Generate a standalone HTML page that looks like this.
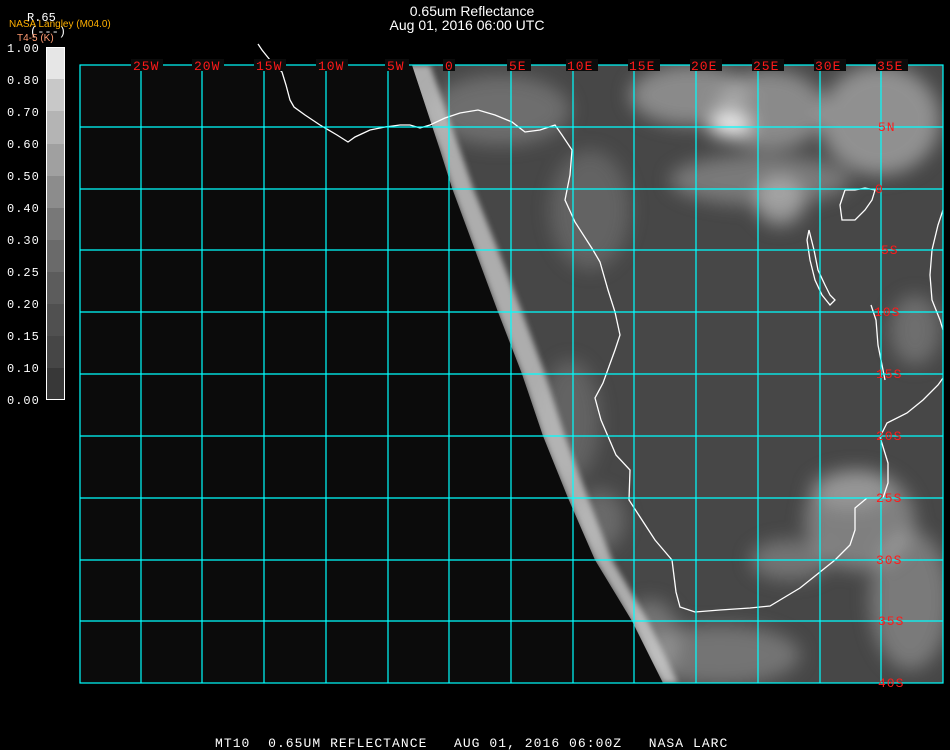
<!DOCTYPE html>
<html><head><style>
html,body{margin:0;padding:0;background:#000;width:950px;height:750px;overflow:hidden}
svg{position:absolute;left:0;top:0}
</style></head><body>
<svg width="950" height="750" viewBox="0 0 950 750" xmlns="http://www.w3.org/2000/svg">
<defs>
<filter id="b" x="-50%" y="-50%" width="200%" height="200%"><feGaussianBlur stdDeviation="9"/></filter>
<filter id="b2" x="-50%" y="-50%" width="200%" height="200%"><feGaussianBlur stdDeviation="3"/></filter>
<clipPath id="earth"><polygon points="412,65 440,150 452,188 475,250 498,312 522,374 543,436 568,498 595,560 632,621 663,683 943,683 943,65"/></clipPath>
</defs>
<rect x="80" y="65" width="863" height="618" fill="#0b0b0b"/>
<g clip-path="url(#earth)">
<rect x="400" y="65" width="543" height="618" fill="#474747"/>
<g filter="url(#b)" fill="#b8b8b8">
<ellipse cx="690" cy="95" rx="60" ry="30" opacity=".6"/>
<ellipse cx="770" cy="110" rx="55" ry="40" opacity=".6"/>
<ellipse cx="880" cy="120" rx="60" ry="55" opacity=".65"/>
<ellipse cx="760" cy="180" rx="90" ry="25" opacity=".45"/>
<ellipse cx="780" cy="200" rx="25" ry="25" opacity=".7"/>
<ellipse cx="730" cy="125" rx="22" ry="12" fill="#eee"/>
<ellipse cx="500" cy="110" rx="70" ry="35" opacity=".35"/>
<ellipse cx="590" cy="210" rx="40" ry="60" opacity=".25"/>
<ellipse cx="570" cy="420" rx="30" ry="60" opacity=".25"/>
<ellipse cx="860" cy="520" rx="55" ry="50" opacity=".5"/>
<ellipse cx="910" cy="600" rx="40" ry="70" opacity=".45"/>
<ellipse cx="790" cy="560" rx="40" ry="20" opacity=".4"/>
<ellipse cx="720" cy="655" rx="80" ry="30" opacity=".4"/>
<ellipse cx="650" cy="640" rx="30" ry="40" opacity=".4"/>
<ellipse cx="600" cy="520" rx="25" ry="30" opacity=".3"/>
<ellipse cx="915" cy="330" rx="25" ry="35" opacity=".35"/>
<ellipse cx="850" cy="490" rx="40" ry="20" opacity=".4"/>
</g>
<polygon filter="url(#b2)" fill="#cfcfcf" opacity=".75" points="405,65 440,150 452,188 475,250 498,312 522,374 543,436 568,498 595,560 632,621 663,683 678,683 648,621 612,560 588,498 565,436 545,374 522,312 498,250 473,188 460,150 430,65"/>
</g>
<g fill="none" stroke="#fff" stroke-width="1.3">
<polyline points="258,44 262,50 270,60 282,72 286,85 290,100 294,107 305,115 320,125 337,135 348,142 355,137 370,130 385,127 400,125 410,125 420,128 430,125 445,118 460,113 478,110 495,115 512,122 525,132 540,130 555,125 562,135 572,150 570,175 565,200 575,222 593,250 600,262 608,290 615,312 620,335 615,350 603,383 595,398 601,420 616,455 630,470 629,500 642,520 655,540 672,560 676,592 680,607 695,612 720,610 750,608 770,606 800,588 835,560 850,545 855,530 855,508 867,498 883,498 888,483 888,463 880,437 887,423 907,413 923,400 938,385 943,378"/>
<polyline points="943,210 938,225 932,250 930,275 932,300 940,320 943,330"/>
<polyline points="809,230 814,250 818,270 825,285 830,295 835,300 830,305 822,295 815,280 810,260 807,240 809,230"/>
<polyline points="845,190 840,205 842,220 855,220 865,210 872,200 875,190 865,188 855,190 845,190"/>
<polyline points="871,305 876,320 878,345 882,365 885,380"/>
</g>
<g stroke="#00ffff" stroke-width="1.2" fill="none">
<rect x="80" y="65" width="863" height="618"/>
<path d="M141 65V683M202 65V683M264 65V683M326 65V683M388 65V683M449 65V683M511 65V683M573 65V683M634 65V683M696 65V683M758 65V683M820 65V683M881 65V683"/>
<path d="M80 127H943M80 189H943M80 250H943M80 312H943M80 374H943M80 436H943M80 498H943M80 560H943M80 621H943"/>
</g>
<g font-family="Liberation Mono, monospace" font-size="13" letter-spacing="1" fill="#ff1a1a">
<g fill="#0b0b0b"><rect x="131" y="59" width="32" height="12"/><rect x="192" y="59" width="32" height="12"/><rect x="254" y="59" width="32" height="12"/><rect x="316" y="59" width="32" height="12"/><rect x="385" y="59" width="24" height="12"/><rect x="443" y="59" width="12" height="12"/><rect x="507" y="59" width="24" height="12"/><rect x="566" y="59" width="32" height="12"/><rect x="628" y="59" width="32" height="12"/><rect x="690" y="59" width="32" height="12"/><rect x="752" y="59" width="32" height="12"/><rect x="814" y="59" width="32" height="12"/><rect x="876" y="59" width="32" height="12"/></g>
<text x="133" y="70">25W</text><text x="194" y="70">20W</text><text x="256" y="70">15W</text><text x="318" y="70">10W</text><text x="387" y="70">5W</text><text x="445" y="70">0</text><text x="509" y="70">5E</text><text x="567" y="70">10E</text><text x="629" y="70">15E</text><text x="691" y="70">20E</text><text x="753" y="70">25E</text><text x="815" y="70">30E</text><text x="877" y="70">35E</text>
<text x="878" y="131">5N</text><text x="875" y="193">0</text><text x="881" y="254">5S</text><text x="874" y="316">10S</text><text x="876" y="378">15S</text><text x="876" y="440">20S</text><text x="876" y="502">25S</text><text x="876" y="564">30S</text><text x="878" y="625">35S</text><text x="878" y="687">40S</text>
</g>
<g font-family="Liberation Sans, sans-serif" font-size="14" fill="#fff" text-anchor="middle">
<text x="472" y="16">0.65um Reflectance</text>
<text x="467" y="30">Aug 01, 2016 06:00 UTC</text>
</g>
<g font-family="Liberation Mono, monospace" font-size="12" fill="#fff">
<text x="27" y="21">R.65</text><text x="30" y="35">(---)</text>
</g>
<text x="9" y="27" font-family="Liberation Sans, sans-serif" font-size="10" fill="#ffb000">NASA Langley (M04.0)</text>
<text x="17" y="41" font-family="Liberation Sans, sans-serif" font-size="10" fill="#ff9a70">T4-5 (K)</text>
<g>
<rect x="46" y="47" width="18" height="32" fill="#e6e6e6"/><rect x="46" y="79" width="18" height="32" fill="#c8c8c8"/><rect x="46" y="111" width="18" height="33" fill="#b4b4b4"/><rect x="46" y="144" width="18" height="32" fill="#a0a0a0"/><rect x="46" y="176" width="18" height="32" fill="#8c8c8c"/><rect x="46" y="208" width="18" height="32" fill="#787878"/><rect x="46" y="240" width="18" height="32" fill="#6a6a6a"/><rect x="46" y="272" width="18" height="32" fill="#5c5c5c"/><rect x="46" y="304" width="18" height="32" fill="#505050"/><rect x="46" y="336" width="18" height="32" fill="#464646"/><rect x="46" y="368" width="18" height="32" fill="#383838"/>
<rect x="46.5" y="47.5" width="18" height="352" fill="none" stroke="#fff"/>
</g>
<g font-family="Liberation Mono, monospace" font-size="12" letter-spacing="1" fill="#fff">
<text x="7" y="52">1.00</text><text x="7" y="84">0.80</text><text x="7" y="116">0.70</text><text x="7" y="148">0.60</text><text x="7" y="180">0.50</text><text x="7" y="212">0.40</text><text x="7" y="244">0.30</text><text x="7" y="276">0.25</text><text x="7" y="308">0.20</text><text x="7" y="340">0.15</text><text x="7" y="372">0.10</text><text x="7" y="404">0.00</text>
</g>
<text x="215" y="747" font-family="Liberation Mono, monospace" font-size="13" letter-spacing="1.05" fill="#fff" xml:space="preserve">MT10  0.65UM REFLECTANCE   AUG 01, 2016 06:00Z   NASA LARC</text>
</svg>
</body></html>
